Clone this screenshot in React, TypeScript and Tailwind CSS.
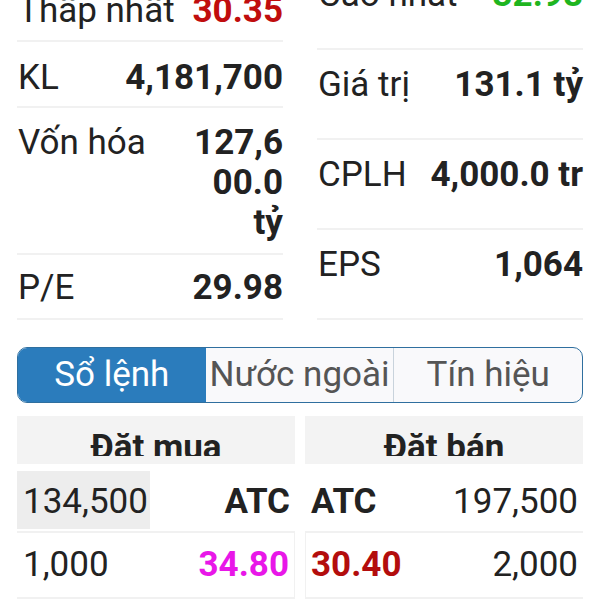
import React from "react";

type Stat = { label: string; value: React.ReactNode; color?: string; h: string; pt: string };

const leftStats: Stat[] = [
  { label: "Thấp nhất", value: "30.35", color: "text-[#c00d0d]", h: "h-[82px]", pt: "pt-[31px]" },
  { label: "KL", value: "4,181,700", h: "h-[66px]", pt: "pt-[16px]" },
  {
    label: "Vốn hóa",
    value: (
      <>
        127,6
        <br />
        00.0
        <br />
        tỷ
      </>
    ),
    h: "h-[147px]",
    pt: "pt-[15px]",
  },
  { label: "P/E", value: "29.98", h: "h-[65px]", pt: "pt-[13px]" },
];

const rightStats: Stat[] = [
  { label: "Cao nhất", value: "32.98", color: "text-[#1fb51f]", h: "h-[90px]", pt: "pt-[15px]" },
  { label: "Giá trị", value: "131.1 tỷ", h: "h-[90px]", pt: "pt-[15px]" },
  { label: "CPLH", value: "4,000.0 tr", h: "h-[90px]", pt: "pt-[15px]" },
  { label: "EPS", value: "1,064", h: "h-[90px]", pt: "pt-[15px]" },
];

function StatColumn({ rows }: { rows: Stat[] }) {
  return (
    <div className="w-[266px] flex flex-col">
      {rows.map((r) => (
        <div
          key={r.label}
          className={`${r.h} ${r.pt} flex items-start justify-between border-b-2 border-[#f1f1f1] box-border`}
        >
          <span className="pl-[1px] whitespace-nowrap">{r.label}</span>
          <span className={`font-bold text-right ${r.color ?? "text-[#222]"}`}>{r.value}</span>
        </div>
      ))}
    </div>
  );
}

export default function App() {
  return (
    <div
      className="w-[600px] h-[600px] overflow-hidden bg-white text-[#222] text-[35px] leading-[40px]"
      style={{ fontFamily: "Roboto, 'Noto Sans', sans-serif" }}
    >
      {/* Stats */}
      <div className="flex gap-[34px] px-[17px] -mt-[40px]">
        <StatColumn rows={leftStats} />
        <StatColumn rows={rightStats} />
      </div>

      {/* Tabs */}
      <div className="mx-[17px] mt-[27px] h-[56px] flex rounded-[10px] border-[1.5px] border-[#2f6f9f] overflow-hidden bg-[#f9f9fb] text-[35px]">
        <div className="flex-1 flex items-center justify-center bg-[#2b7cbc] text-white">Sổ lệnh</div>
        <div className="flex-1 flex items-center justify-center text-[#555] border-r border-[#c9d3dc] whitespace-nowrap">
          Nước ngoài
        </div>
        <div className="flex-1 flex items-center justify-center text-[#555]">Tín hiệu</div>
      </div>

      {/* Order book */}
      <div className="mx-[17px] mt-[13px] flex gap-[10px]">
        <div className="flex-1 flex flex-col">
          <div className="h-[48px] bg-[#f3f3f3] pt-[12px] mb-[3px]">
            <div className="h-[28px] overflow-hidden text-center font-bold">Đặt mua</div>
          </div>
          <div className="h-[66px] flex items-start justify-between border-b-2 border-[#f1f1f1]">
            <div className="mt-[4px] h-[58px] w-[133px] bg-[#ededed] pl-[6px] pt-[11px]">134,500</div>
            <div className="pt-[15px] pr-[5px] font-bold">ATC</div>
          </div>
          <div className="h-[66px] flex items-start justify-between border-b-2 border-r border-[#f1f1f1] pt-[12px]">
            <span className="pl-[6px]">1,000</span>
            <span className="pr-[5px] font-bold text-[#e817e8]">34.80</span>
          </div>
        </div>
        <div className="flex-1 flex flex-col">
          <div className="h-[48px] bg-[#f3f3f3] pt-[12px] mb-[3px]">
            <div className="h-[28px] overflow-hidden text-center font-bold">Đặt bán</div>
          </div>
          <div className="h-[66px] flex items-start justify-between border-b-2 border-[#f1f1f1] pt-[15px]">
            <span className="pl-[6px] font-bold">ATC</span>
            <span className="pr-[5px]">197,500</span>
          </div>
          <div className="h-[66px] flex items-start justify-between border-b-2 border-l border-[#f1f1f1] pt-[12px]">
            <span className="pl-[5px] font-bold text-[#b30d0d]">30.40</span>
            <span className="pr-[5px]">2,000</span>
          </div>
        </div>
      </div>
    </div>
  );
}
